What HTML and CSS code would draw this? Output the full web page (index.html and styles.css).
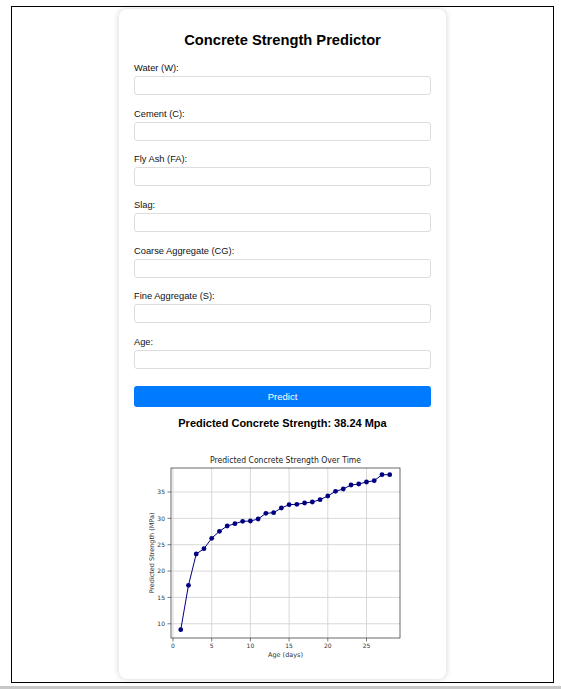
FILE: index.html
```html
<!DOCTYPE html>
<html lang="en">
<head>
<meta charset="utf-8">
<title>Concrete Strength Predictor</title>
<link rel="stylesheet" href="styles.css">
</head>
<body>
<div class="frame">
  <div class="card">
    <h1 class="title">Concrete Strength Predictor</h1>
    <form class="form">
      <div class="field"><label class="label">Water (W):</label><input class="input" type="text"></div>
      <div class="field"><label class="label">Cement (C):</label><input class="input" type="text"></div>
      <div class="field"><label class="label">Fly Ash (FA):</label><input class="input" type="text"></div>
      <div class="field"><label class="label">Slag:</label><input class="input" type="text"></div>
      <div class="field"><label class="label">Coarse Aggregate (CG):</label><input class="input" type="text"></div>
      <div class="field"><label class="label">Fine Aggregate (S):</label><input class="input" type="text"></div>
      <div class="field"><label class="label">Age:</label><input class="input" type="text"></div>
      <button class="btn" type="button">Predict</button>
    </form>
    <p class="result">Predicted Concrete Strength: 38.24 Mpa</p>
    <svg class="chart" width="297" height="230" viewBox="133 440 297 230" xmlns="http://www.w3.org/2000/svg">
      <text class="c-title" x="284.5" y="462" text-anchor="middle" textLength="151" lengthAdjust="spacingAndGlyphs">Predicted Concrete Strength Over Time</text>
      <rect x="170" y="467" width="229" height="170" fill="#fff"/>
      <g class="grid">
        <line x1="172" y1="467" x2="172" y2="637"/>
        <line x1="210.7" y1="467" x2="210.7" y2="637"/>
        <line x1="249.4" y1="467" x2="249.4" y2="637"/>
        <line x1="288.1" y1="467" x2="288.1" y2="637"/>
        <line x1="326.8" y1="467" x2="326.8" y2="637"/>
        <line x1="365.5" y1="467" x2="365.5" y2="637"/>
        <line x1="170" y1="491" x2="399" y2="491"/>
        <line x1="170" y1="517.35" x2="399" y2="517.35"/>
        <line x1="170" y1="543.7" x2="399" y2="543.7"/>
        <line x1="170" y1="570.05" x2="399" y2="570.05"/>
        <line x1="170" y1="596.4" x2="399" y2="596.4"/>
        <line x1="170" y1="622.75" x2="399" y2="622.75"/>
      </g>
      <rect class="spine" x="170" y="467" width="229" height="170"/>
      <g class="ticks">
        <line x1="172" y1="637" x2="172" y2="640.5"/>
        <line x1="210.7" y1="637" x2="210.7" y2="640.5"/>
        <line x1="249.4" y1="637" x2="249.4" y2="640.5"/>
        <line x1="288.1" y1="637" x2="288.1" y2="640.5"/>
        <line x1="326.8" y1="637" x2="326.8" y2="640.5"/>
        <line x1="365.5" y1="637" x2="365.5" y2="640.5"/>
        <line x1="166.5" y1="491" x2="170" y2="491"/>
        <line x1="166.5" y1="517.35" x2="170" y2="517.35"/>
        <line x1="166.5" y1="543.7" x2="170" y2="543.7"/>
        <line x1="166.5" y1="570.05" x2="170" y2="570.05"/>
        <line x1="166.5" y1="596.4" x2="170" y2="596.4"/>
        <line x1="166.5" y1="622.75" x2="170" y2="622.75"/>
      </g>
      <g class="tl" text-anchor="middle" fill="#333">
        <text x="172" y="647">0</text>
        <text x="210.7" y="647">5</text>
        <text x="249.4" y="647">10</text>
        <text x="288.1" y="647">15</text>
        <text x="326.8" y="647">20</text>
        <text x="365.5" y="647">25</text>
      </g>
      <g class="tl" text-anchor="end" fill="#333">
        <text x="164" y="493.2">35</text>
        <text x="164" y="519.5">30</text>
        <text x="164" y="545.9">25</text>
        <text x="164" y="572.2">20</text>
        <text x="164" y="598.6">15</text>
        <text x="164" y="624.9">10</text>
      </g>
      <text class="axl" x="284.5" y="655.5" text-anchor="middle">Age (days)</text>
      <text class="axl" x="0" y="0" text-anchor="middle" transform="translate(152.5 552) rotate(-90)">Predicted Strength (MPa)</text>
      <polyline class="series" points="179.74,628.7 187.48,584.3 195.22,553 202.96,547.7 210.7,537.3 218.44,530.3 226.18,525 233.92,522.7 241.66,520.3 249.4,520 257.14,518 264.88,512.3 272.62,511.7 280.36,507 288.1,503.7 295.84,503.3 303.58,502 311.32,501 319.06,498.7 326.8,495 334.54,490.3 342.28,488 350.02,484 357.76,483 365.5,481 373.24,479.7 380.98,473.7 388.72,473.7"/>
      <g class="dots">
        <circle cx="179.74" cy="628.7" r="2.4"/><circle cx="187.48" cy="584.3" r="2.4"/><circle cx="195.22" cy="553" r="2.4"/><circle cx="202.96" cy="547.7" r="2.4"/><circle cx="210.7" cy="537.3" r="2.4"/><circle cx="218.44" cy="530.3" r="2.4"/><circle cx="226.18" cy="525" r="2.4"/><circle cx="233.92" cy="522.7" r="2.4"/><circle cx="241.66" cy="520.3" r="2.4"/><circle cx="249.4" cy="520" r="2.4"/><circle cx="257.14" cy="518" r="2.4"/><circle cx="264.88" cy="512.3" r="2.4"/><circle cx="272.62" cy="511.7" r="2.4"/><circle cx="280.36" cy="507" r="2.4"/><circle cx="288.1" cy="503.7" r="2.4"/><circle cx="295.84" cy="503.3" r="2.4"/><circle cx="303.58" cy="502" r="2.4"/><circle cx="311.32" cy="501" r="2.4"/><circle cx="319.06" cy="498.7" r="2.4"/><circle cx="326.8" cy="495" r="2.4"/><circle cx="334.54" cy="490.3" r="2.4"/><circle cx="342.28" cy="488" r="2.4"/><circle cx="350.02" cy="484" r="2.4"/><circle cx="357.76" cy="483" r="2.4"/><circle cx="365.5" cy="481" r="2.4"/><circle cx="373.24" cy="479.7" r="2.4"/><circle cx="380.98" cy="473.7" r="2.4"/><circle cx="388.72" cy="473.7" r="2.4"/>
      </g>
    </svg>
  </div>
</div>
<div class="strip"></div>
</body>
</html>
```
FILE: styles.css
```css
html, body {
  margin: 0;
  padding: 0;
  background: #fff;
}
body {
  font-family: "Liberation Sans", Arial, sans-serif;
  color: #000;
  overflow: hidden;
}
.frame {
  box-sizing: border-box;
  margin: 6px 0 0 11px;
  width: 543px;
  height: 677px;
  border: 1.5px solid #000;
  padding-top: 2px;
}
.card {
  box-sizing: border-box;
  width: 327px;
  height: 670px;
  margin: 0 auto;
  background: #fff;
  border-radius: 8px;
  box-shadow: 0 0 6px rgba(0, 0, 0, 0.18);
  padding: 22px 15px 0 15px;
}
.title {
  margin: 0 0 12px 0;
  font-size: 14.7px;
  line-height: 19px;
  text-align: center;
  font-weight: bold;
}
.form {
  margin: 0;
}
.field {
  margin-bottom: 12.7px;
}
.label {
  display: block;
  font-size: 9.3px;
  line-height: 12px;
  margin-bottom: 2px;
  color: #111;
}
.input {
  display: block;
  box-sizing: border-box;
  width: 100%;
  height: 19px;
  margin: 0;
  border: 1px solid #ddd;
  border-radius: 3px;
  background: #fff;
  padding: 0 5px;
}
.btn {
  display: block;
  width: 100%;
  height: 21px;
  margin-top: 17px;
  border: none;
  border-radius: 3px;
  background: #007bff;
  color: #fff;
  font-family: "Liberation Sans", Arial, sans-serif;
  font-size: 9.5px;
  padding: 0;
}
.result {
  margin: 9px 0 0 0;
  font-size: 11px;
  line-height: 15px;
  font-weight: bold;
  text-align: center;
}
.chart {
  display: block;
  margin-top: 10px;
  font-family: "DejaVu Sans", sans-serif;
}
.c-title {
  font-size: 8.5px;
  fill: #222;
}
.grid line {
  stroke: #d4d4d4;
  stroke-width: 0.9;
}
.spine {
  fill: none;
  stroke: #444;
  stroke-width: 0.8;
}
.ticks line {
  stroke: #444;
  stroke-width: 0.7;
}
.tl text {
  font-size: 6px;
  fill: #333;
}
.axl {
  font-size: 6.5px;
  fill: #333;
}
.series {
  fill: none;
  stroke: #000080;
  stroke-width: 1;
}
.dots circle {
  fill: #000080;
}
.strip {
  margin-top: 3px;
  height: 3px;
  background: #c8c8c8;
}
```
